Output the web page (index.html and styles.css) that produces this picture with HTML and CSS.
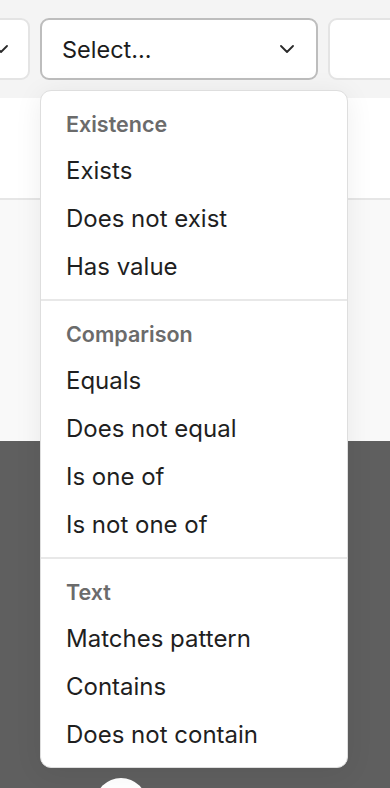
FILE: index.html
```html
<!DOCTYPE html>
<html lang="en">
<head>
    <meta charset="UTF-8">
    <meta name="viewport" content="width=device-width, initial-scale=1.0">
    <title>Filter condition</title>
    <link rel="stylesheet" href="styles.css">
</head>
<body>

<div class="toolbar">
    <div class="toolbar-row">
        <div class="select select-side">
            <span class="select-label"></span>
            <svg class="chevron" viewBox="0 0 14 8" width="14" height="8"><path d="M1 1l6 6 6-6"/></svg>
        </div>
        <div class="select select-active">
            <span class="select-label">Select...</span>
            <svg class="chevron" viewBox="0 0 14 8" width="14" height="8"><path d="M1 1l6 6 6-6"/></svg>
        </div>
        <div class="select select-side"></div>
    </div>
</div>

<div class="panel"></div>
<div class="content"></div>
<div class="backdrop">
    <div class="fab"></div>
</div>

<div class="menu">
    <div class="menu-group">
        <div class="menu-heading">Existence</div>
        <div class="menu-item">Exists</div>
        <div class="menu-item">Does not exist</div>
        <div class="menu-item">Has value</div>
    </div>
    <div class="menu-group">
        <div class="menu-heading">Comparison</div>
        <div class="menu-item">Equals</div>
        <div class="menu-item">Does not equal</div>
        <div class="menu-item">Is one of</div>
        <div class="menu-item">Is not one of</div>
    </div>
    <div class="menu-group">
        <div class="menu-heading">Text</div>
        <div class="menu-item">Matches pattern</div>
        <div class="menu-item">Contains</div>
        <div class="menu-item">Does not contain</div>
    </div>
</div>

</body>
</html>
```

FILE: styles.css
```css
body {
    font-family: 'Inter', 'Noto Sans', sans-serif;
    background-color: #f9f9f9;
    color: #1f1f1f;
    margin: 0;
    height: 788px;
    overflow: hidden;
    position: relative;
}
.toolbar {
    background-color: #f4f4f4;
    height: 98px;
    box-sizing: border-box;
    padding-top: 18px;
    overflow: hidden;
}
.toolbar-row {
    display: flex;
    gap: 10px;
    margin-left: -100px;
}
.select {
    flex: none;
    height: 62px;
    box-sizing: border-box;
    background-color: #fff;
    border: 2px solid #e4e4e4;
    border-radius: 9px;
    display: flex;
    align-items: center;
    justify-content: space-between;
    padding: 0 22px 0 20px;
}
.select-side {
    width: 130px;
}
.select-side:first-child {
    padding-right: 20px;
}
.select-active {
    width: 278px;
    border-color: #bdbdbd;
}
.select-label {
    font-size: 23.5px;
    color: #1c1c1c;
}
.chevron {
    fill: none;
    stroke: #2a2a2a;
    stroke-width: 1.8;
    stroke-linecap: round;
    stroke-linejoin: round;
}
.panel {
    background-color: #fff;
    height: 100px;
    border-bottom: 2px solid #e6e6e6;
}
.content {
    height: 241px;
    background-color: #f9f9f9;
}
.backdrop {
    height: 347px;
    background-color: #5f5f5f;
    position: relative;
    overflow: hidden;
}
.fab {
    position: absolute;
    left: 95px;
    top: 337px;
    width: 52px;
    height: 52px;
    border-radius: 50%;
    background-color: #fff;
}
.menu {
    position: absolute;
    top: 90px;
    left: 40px;
    width: 308px;
    box-sizing: border-box;
    background-color: #fff;
    border: 1px solid #dedede;
    border-radius: 11px;
    box-shadow: 0 4px 28px rgba(0, 0, 0, 0.07);
}
.menu-group {
    padding: 10px 0 8px;
}
.menu-group + .menu-group {
    border-top: 2px solid #e8e8e8;
}
.menu-heading {
    height: 46px;
    line-height: 46px;
    padding: 0 25px;
    font-size: 21.5px;
    font-weight: 600;
    color: #6b6b6b;
}
.menu-item {
    height: 48px;
    line-height: 48px;
    padding: 0 25px;
    font-size: 24px;
    color: #1f1f1f;
}
```
